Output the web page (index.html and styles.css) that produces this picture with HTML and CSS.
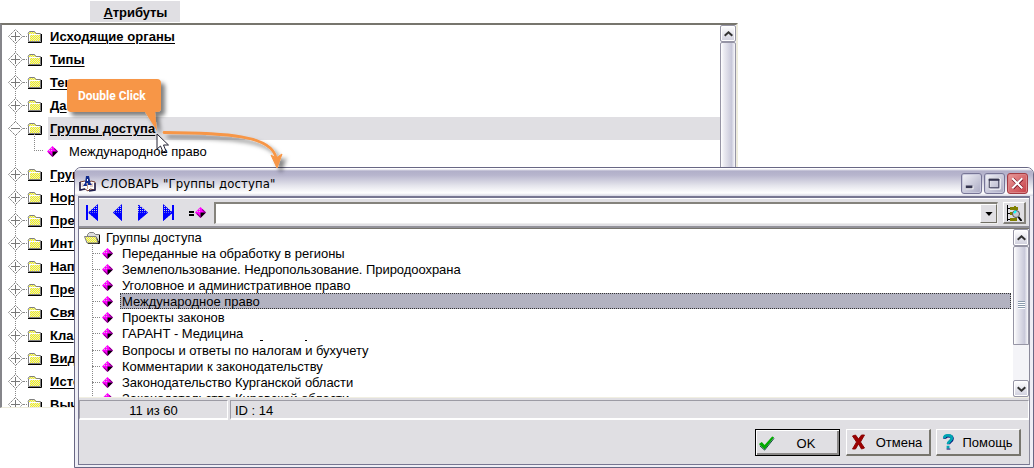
FILE: index.html
```html
<!DOCTYPE html>
<html lang="ru">
<head>
<meta charset="utf-8">
<title>Атрибуты</title>
<link rel="stylesheet" href="styles.css">
</head>
<body>
<svg class="defs" width="0" height="0" aria-hidden="true">
  <defs>
    <pattern id="dither" width="2" height="2" patternUnits="userSpaceOnUse"><rect width="2" height="2" fill="#dedede"/><path d="M0 0h1v1h-1zM1 1h1v1h-1z" fill="#ff0"/></pattern>
    <pattern id="dither-odd" width="2" height="2" patternUnits="userSpaceOnUse"><rect width="2" height="2" fill="#dedede"/><path d="M1 0h1v1h-1zM0 1h1v1h-1z" fill="#ff0"/></pattern>
    <pattern id="pink" width="2" height="2" patternUnits="userSpaceOnUse"><rect width="2" height="2" fill="#f0f"/><path d="M0 0h1v1h-1z" fill="#ccc"/></pattern>
    <pattern id="blue" width="2" height="2" patternUnits="userSpaceOnUse"><rect width="2" height="2" fill="#00f"/><path d="M0 0h1v1h-1z" fill="#ccd"/></pattern>
    <symbol id="folder" viewBox="0 0 15 14"><path d="M1 3.500L2.500 1.500h5L9 3.500h4.500v8H1.500V3.500" fill="url(#dither-odd)" stroke="#808080"/><path d="M2.500 10.500v-6h10" fill="none" stroke="#fff"/><path d="M1 12.500h13.500V4" fill="none" stroke="#000"/></symbol>
    <symbol id="open" viewBox="0 0 17 14"><path d="M3.500 12V3.500l2-2h4l2 2h4V12" fill="#ddd" stroke="#808080"/><path d="M15.500 4v8.500H4M12 6l3 6" fill="none" stroke="#000"/><path d="M.5 5.500H12l2 6.500H3z" fill="url(#dither)" stroke="#808080"/></symbol>
    <symbol id="diamond" viewBox="0 0 11 11"><path d="M5.500 0L11 5.500 5.500 11 0 5.500z" fill="#f0f"/><path d="M5 1h1v4H2V4h1V3h1V2h1z" fill="url(#pink)"/><path d="M5.500 5.500H11L5.500 11z" fill="#000"/><path d="M7.500 2L11 5.500H9.500L7 3z" fill="#800080"/><path d="M1 6.500l4.500 4.500V9.500L2.500 6.500z" fill="#800080"/></symbol>
    <symbol id="plus" viewBox="0 0 15 15"><path d="M7.500.5l7 7-7 7-7-7z" fill="#fff" stroke="#777" stroke-dasharray="1.500 .7"/><path d="M3 7.500h9M7.500 3v9" stroke="#777"/></symbol>
    <symbol id="minus" viewBox="0 0 15 15"><path d="M7.500.5l7 7-7 7-7-7z" fill="#fff" stroke="#777" stroke-dasharray="1.500 .7"/><path d="M3 7.500h9" stroke="#777"/></symbol>
    <symbol id="up" viewBox="0 0 9 6"><path d="M.7 4.800l3.800-3.500 3.800 3.500" fill="none" stroke="#333" stroke-width="2"/></symbol>
    <symbol id="down" viewBox="0 0 9 6"><path d="M.7 1.200l3.800 3.500 3.800-3.500" fill="none" stroke="#333" stroke-width="2"/></symbol>
  </defs>
</svg>

<main class="screen">
  <div class="tab"><u>А</u>трибуты</div>
  <section class="attributes">
    <ul class="attr-list">
      <li><svg class="knot"><use href="#plus"/></svg><i></i><svg class="folder"><use href="#folder"/></svg><span>Исходящие органы</span></li>
      <li><svg class="knot"><use href="#plus"/></svg><i></i><svg class="folder"><use href="#folder"/></svg><span>Типы</span></li>
      <li><svg class="knot"><use href="#plus"/></svg><i></i><svg class="folder"><use href="#folder"/></svg><span>Тек</span></li>
      <li><svg class="knot"><use href="#plus"/></svg><i></i><svg class="folder"><use href="#folder"/></svg><span>Да</span></li>
      <li class="current"><svg class="knot"><use href="#minus"/></svg><i></i><svg class="folder"><use href="#folder"/></svg><span>Группы доступа</span></li>
      <li class="leaf"><b class="elbow"></b><svg class="diamond"><use href="#diamond"/></svg><em>Международное право</em></li>
      <li><svg class="knot"><use href="#plus"/></svg><i></i><svg class="folder"><use href="#folder"/></svg><span>Груп</span></li>
      <li><svg class="knot"><use href="#plus"/></svg><i></i><svg class="folder"><use href="#folder"/></svg><span>Нор</span></li>
      <li><svg class="knot"><use href="#plus"/></svg><i></i><svg class="folder"><use href="#folder"/></svg><span>Пре</span></li>
      <li><svg class="knot"><use href="#plus"/></svg><i></i><svg class="folder"><use href="#folder"/></svg><span>Инте</span></li>
      <li><svg class="knot"><use href="#plus"/></svg><i></i><svg class="folder"><use href="#folder"/></svg><span>Нап</span></li>
      <li><svg class="knot"><use href="#plus"/></svg><i></i><svg class="folder"><use href="#folder"/></svg><span>Пре</span></li>
      <li><svg class="knot"><use href="#plus"/></svg><i></i><svg class="folder"><use href="#folder"/></svg><span>Свя</span></li>
      <li><svg class="knot"><use href="#plus"/></svg><i></i><svg class="folder"><use href="#folder"/></svg><span>Кла</span></li>
      <li><svg class="knot"><use href="#plus"/></svg><i></i><svg class="folder"><use href="#folder"/></svg><span>Вид</span></li>
      <li><svg class="knot"><use href="#plus"/></svg><i></i><svg class="folder"><use href="#folder"/></svg><span>Исто</span></li>
      <li><svg class="knot"><use href="#plus"/></svg><i></i><svg class="folder"><use href="#folder"/></svg><span>Выч</span></li>
    </ul>
    <div class="scroll"><div class="sbtn"><svg><use href="#up"/></svg></div><div class="thumb"></div></div>
  </section>

  <section class="window">
    <header class="titlebar">
      <svg class="app-icon" viewBox="0 0 17 17"><path d="M1 7l5-1 3 2 3-2 4 1v8l-5-1-2 2-3-2-5 1z" fill="#fff" stroke="#743c30"/><path d="M1 7v8l5-1M10 16l6-1V8" fill="none" stroke="#202050" stroke-width="1.500"/><path d="M8.500 8v6M11 9h3M11 11h3M2.500 9h2M2.500 11h2" stroke="#caa090"/><path d="M4 11l2-3 1-7h3l1.500 7 1.500 2H9V8H7.500L8 11z" fill="#102a8c"/><path d="M8 4h1v2H8z" fill="#fff"/></svg>
      <h1>СЛОВАРЬ "Группы доступа"</h1>
      <div class="wbtn"><svg viewBox="0 0 20 20"><path d="M4 13h8v3H4z" fill="#fff"/><path d="M4 12h7v3H4z" fill="#35354f"/></svg></div>
      <div class="wbtn"><svg viewBox="0 0 20 20"><path d="M5 5h11v11H5z" fill="none" stroke="#fff"/><path d="M4.500 5.500h10v9h-10zM4 6h11" fill="none" stroke="#35354f"/><path d="M4 5h11v2H4z" fill="#35354f"/></svg></div>
      <div class="wbtn close"><svg viewBox="0 0 20 20"><path d="M5 5l10 10M15 5L5 15" stroke="#712" stroke-width="3.500"/><path d="M4.500 4.500l10.500 10.500M15 4.500L4.500 15" stroke="#fff" stroke-width="2.200"/></svg></div>
    </header>
    <div class="client">
      <div class="toolbar">
        <svg class="nav" viewBox="0 0 132 22">
          <path d="M4 3h2v15H4z" fill="#00f"/><path d="M16 2v17L6 10.500z" fill="url(#blue)"/><path d="M6 10.500h10V19z" fill="#00f"/>
          <path d="M40 2v17l-9-8.500z" fill="url(#blue)"/><path d="M31 10.500h9V19z" fill="#00f"/>
          <path d="M56 2v17l10-8.500z" fill="url(#blue)"/><path d="M66 10.500H56V19z" fill="#00f"/>
          <path d="M81 2v17l10-8.500z" fill="url(#blue)"/><path d="M91 10.500H81V19z" fill="#00f"/><path d="M90 3h2v15h-2z" fill="#00f"/>
          <path d="M107 9h5v2h-5zM107 12h5v2h-5z" fill="#000"/><use href="#diamond" x="113" y="5" width="11" height="11"/>
        </svg>
        <div class="combo"><div class="drop"><svg viewBox="0 0 9 5"><path d="M0 0h9L4.500 5z"/></svg></div></div>
        <div class="find"><svg viewBox="0 0 16 16"><path d="M1.500 0v16M2 3.500h4M2 8.500h4M2 14.500h4" fill="none" stroke="#000"/><path d="M4 2h4V1h2v1h2v3H4zM4 7h5v3H4zM4 13h7v3H4z" fill="#808000"/><circle cx="10" cy="9" r="3.500" fill="#c8c8d0" stroke="#555"/><path d="M8 8l2-2" stroke="#0ff" stroke-width="2"/><path d="M12.500 12l3 4" stroke="#000" stroke-width="2"/></svg></div>
      </div>
      <div class="dictionary">
        <div class="tree">
          <div class="root"><svg class="open"><use href="#open"/></svg><span>Группы доступа</span></div>
          <ul class="entries">
            <li><svg class="diamond"><use href="#diamond"/></svg><span>Переданные на обработку в регионы</span></li>
            <li><svg class="diamond"><use href="#diamond"/></svg><span>Землепользование. Недропользование. Природоохрана</span></li>
            <li><svg class="diamond"><use href="#diamond"/></svg><span>Уголовное и административное право</span></li>
            <li class="selected"><svg class="diamond"><use href="#diamond"/></svg><span>Международное право</span></li>
            <li><svg class="diamond"><use href="#diamond"/></svg><span>Проекты законов</span></li>
            <li class="seam"><svg class="diamond"><use href="#diamond"/></svg><span>ГАРАНТ - Медицина</span><svg class="specks" viewBox="0 0 60 2"><path d="M0 0h3v1H0zM45 0h2v1h-2z"/></svg></li>
            <li><svg class="diamond"><use href="#diamond"/></svg><span>Вопросы и ответы по налогам и бухучету</span></li>
            <li><svg class="diamond"><use href="#diamond"/></svg><span>Комментарии к законодательству</span></li>
            <li><svg class="diamond"><use href="#diamond"/></svg><span>Законодательство Курганской области</span></li>
            <li><svg class="diamond"><use href="#diamond"/></svg><span>Законодательство Кировской области</span></li>
          </ul>
        </div>
        <div class="scroll"><div class="sbtn"><svg><use href="#up"/></svg></div><div class="thumb part"><b></b></div><div class="track"></div><div class="sbtn"><svg><use href="#down"/></svg></div></div>
      </div>
      <div class="status"><div class="count">11 из 60</div><div class="ident">ID : 14</div></div>
      <footer class="actions">
        <button class="btn default"><svg viewBox="0 0 18 16"><path d="M1 9l3-2 3 3 8-9 2 1L7 15z" fill="#0a0"/><path d="M2 11l5 4.500L17 3" fill="none" stroke="#004030"/></svg><span>OK</span></button>
        <button class="btn cancel"><svg viewBox="0 0 14 16"><path d="M1 2l3-1 3 4 3-4h3L9 8l4 6-3 1-3-5-3 5H1l4-7z" fill="#9c0000" stroke="#800" stroke-width=".9"/></svg><span>Отмена</span></button>
        <button class="btn help"><svg viewBox="0 0 12 17"><path d="M2 5c0-4 8-4 8 0 0 3-4 3-4 6" fill="none" stroke="#000070" stroke-width="3.200"/><path d="M1.500 4.500c0-4 8-4 8 0 0 3-4 3-4 6M4 14h3" fill="none" stroke="#00a6b4" stroke-width="3"/><path d="M4 16h4" stroke="#000070"/></svg><span>Помощь</span></button>
      </footer>
    </div>
  </section>

  <svg class="callout" viewBox="0 0 240 110">
    <defs><filter id="shadow" x="-20%" y="-20%" width="150%" height="150%"><feDropShadow dx="4" dy="4" stdDeviation="2" flood-color="#000" flood-opacity=".5"/></filter></defs>
    <g filter="url(#shadow)">
      <path d="M11 4h86q4 0 4 4v25q0 4-4 4h-2l2 19L85 37H11q-4 0-4-4V8q0-4 4-4z" fill="#f79646"/>
      <path d="M104 57.500C165 58 212 60 216 83" fill="none" stroke="#f79646" stroke-width="2.800" stroke-linecap="round"/>
      <path d="M211 80l5 3 6-4-5 14z" fill="#f79646" stroke="#f79646"/>
    </g>
    <path d="M97 59v15l3.500-3 2.500 6 3-1-2.500-6h5z" fill="#fff" stroke="#223"/>
    <text x="18" y="25">Double Click</text>
  </svg>
</main>
</body>
</html>
```
FILE: styles.css
```css
* { box-sizing: border-box; }
body { margin: 0; background: #fff; color: #000; font: 13px/16px "Liberation Sans", Arial, sans-serif; }
ul, h1 { margin: 0; padding: 0; list-style: none; font: inherit; }
svg { display: block; flex: none; }
.defs { position: absolute; }
.screen { position: relative; width: 1034px; height: 468px; overflow: hidden; }
.tab { width: 90px; height: 22px; margin-left: 90px; padding-left: 1px; background: #e0dfe3; border-top: 1px solid #fff; line-height: 23px; text-align: center; font-weight: bold; letter-spacing: -.05px; }
.tab + .attributes { margin-top: 1px; }
.attributes { display: flex; width: 738px; height: 385px; overflow: hidden; border: 2px solid #85858a; border-top-color: #77756d; border-right: 2px solid #eeecdd; border-bottom: 1px solid #eeecdd; }
.attr-list { flex: 1; padding-left: 6px; background: repeating-linear-gradient(to bottom, #888 0 1px, transparent 1px 2px) 13px 12px / 1px 400px no-repeat; }
.attr-list li { display: flex; align-items: center; height: 23px; }
.attr-list span { height: 23px; margin-left: 6px; padding-left: 2px; line-height: 24px; flex: 1; font-weight: bold; letter-spacing: .05px; text-decoration: underline; text-underline-offset: 2px; text-decoration-thickness: 1px; }
.attr-list .current span { background: #e0dfe3; }
.attr-list em { margin-left: 11px; font-style: normal; }
.attr-list i { width: 4px; height: 1px; border-top: 1px dotted #888; }
.knot { width: 15px; height: 15px; }
.folder { width: 15px; height: 14px; }
.elbow { width: 9px; height: 17px; margin: -18px 4px 0 26px; border-left: 1px dotted #888; border-bottom: 1px dotted #888; }
.diamond { width: 11px; height: 11px; }
.scroll { display: flex; flex-direction: column; width: 16px; background: #f4f4f8; flex: none; }
.sbtn { display: flex; align-items: center; justify-content: center; height: 17px; flex: none; border: 1px solid #9695a5; border-radius: 2px; background: linear-gradient(#fff, #cfcfdd); box-shadow: inset 0 0 0 1px #fff; }
.sbtn svg { width: 9px; height: 6px; }
.thumb { flex: 1; border: 1px solid #9695a5; border-radius: 2px 2px 0 0; background: linear-gradient(90deg, #fff, #ececf2 20%, #c9c9da 75%, #f8f8fb); }

.window { position: absolute; left: 74px; top: 167px; width: 960px; height: 301px; padding: 0 3px 3px; overflow: hidden; border: 1px solid #686784; border-radius: 7px 7px 0 0; background: #eeeef5; }
.titlebar { display: flex; align-items: center; height: 28px; margin: 0 -3px; padding: 3px 5px 0 4px; background: linear-gradient(#fff 0 1px, #b1afc9 3px, #b7b5cd 7px, #e6e6ed 18px, #fff 25px, #d6d6e2 28px); }
.app-icon { width: 17px; height: 17px; margin-right: 4px; }
h1 { flex: 1; padding-left: 1px; font: 13px/18px "DejaVu Sans Condensed", "Noto Sans", sans-serif; letter-spacing: .12px; }
.wbtn { width: 21px; height: 21px; margin-left: 2px; border: 1px solid #777596; border-radius: 3px; background: linear-gradient(135deg, #f3f3f8, #a9a9c2); box-shadow: inset 0 0 0 1px #c9c9dc; }
.wbtn svg { width: 19px; height: 19px; }
.close { border-color: #a33a42; background: linear-gradient(135deg, #e99b9b, #c73e45); box-shadow: inset 0 0 0 1px #dc8587; }
.client { height: 269px; border: 1px solid #777691; border-top-width: 2px; border-right-color: #8b8a9b; background: #e0dfe3; }
.toolbar { display: flex; align-items: flex-start; height: 30px; padding: 3px 2px 0 3px; border-top: 1px solid #fff; border-bottom: 2px solid #929199; }
.nav { width: 132px; height: 22px; }
.combo { display: flex; justify-content: flex-end; width: 784px; height: 22px; border: 2px solid #85837c; border-right: 1px solid #eee; border-bottom: 1px solid #eee; background: #fff; }
.drop { display: flex; align-items: center; justify-content: center; width: 17px; background: #e0dfe3; border: 1px solid #fff; border-right-color: #716f64; border-bottom-color: #716f64; }
.drop svg { width: 8px; height: 4px; }
.find { display: flex; align-items: center; justify-content: center; width: 23px; height: 22px; margin-left: 5px; border: 1px solid #fff; border-right: 2px solid #85837c; border-bottom: 2px solid #85837c; }
.find svg { width: 16px; height: 16px; }
.dictionary { display: flex; height: 169px; overflow: hidden; background: #fff; border-top: 1px solid #77756d; }
.tree { flex: 1; padding-top: 1px; }
.root { display: flex; align-items: center; height: 15px; padding-left: 5px; }
.root span { margin-left: 5px; letter-spacing: .05px; }
.open { width: 17px; height: 14px; }
.entries { padding-left: 13px; background: repeating-linear-gradient(to bottom, #888 0 1px, transparent 1px 2px) 13px 0 / 1px 160px no-repeat; }
.entries li { display: flex; align-items: center; height: 16px; }
.entries li::before { content: ""; width: 8px; margin-right: 2px; border-top: 1px dotted #888; }
.entries .diamond { margin-right: 7px; }
.entries span { padding: 0 1px; border: 1px solid transparent; line-height: 15px; height: 16px; white-space: nowrap; letter-spacing: -.05px; }
.entries .selected span { flex: 1; margin-right: 2px; background: #b2b2c0; border: 1px dotted #333; letter-spacing: 0; }
.entries .seam { height: 17px; padding-bottom: 1px; }
.specks { width: 60px; height: 2px; align-self: flex-end; margin: 0 0 -1px 15px; }
.part { flex: none; height: 99px; display: flex; justify-content: center; padding-top: 54px; }
.part b { width: 7px; height: 8px; background: repeating-linear-gradient(#8a9aac 0 1px, #fff 1px 2px); }
.track { flex: 1; }
.status { display: flex; height: 23px; padding-top: 2px; border-top: 1px solid #f1efe2; }
.count, .ident { height: 20px; border: 1px solid #9c9ba4; border-right-color: #fff; border-bottom: 2px solid #fff; line-height: 19px; }
.count { width: 149px; text-align: center; }
.ident { flex: 1; margin-left: 2px; padding-left: 4px; }
.actions { display: flex; justify-content: flex-end; gap: 5px; padding: 9px 8px 0; }
.btn { display: flex; align-items: center; width: 85px; height: 27px; padding: 0 5px 0 3px; border: 1px solid #fff; border-right: 2px solid #77756d; border-bottom: 2px solid #77756d; background: #e0dfe3; color: #000; font: inherit; }
.btn span { flex: 1; padding-top: 2px; text-align: center; }
.btn svg { width: 17px; height: 16px; }
.cancel { padding-right: 0; }
.cancel span { padding-left: 2px; }
.help { padding-right: 1px; }
.default { margin-right: 1px; padding-right: 2px; padding-left: 2px; border: 1px solid #000; box-shadow: inset 1px 1px #fff, inset -2px -2px #8b8988; }
.callout { position: absolute; left: 60px; top: 75px; width: 240px; height: 110px; }
.callout text { fill: #fff; font: bold 12px Roboto, sans-serif; }
```
